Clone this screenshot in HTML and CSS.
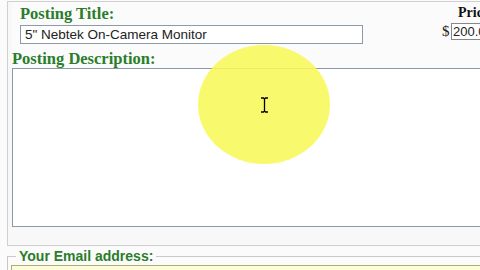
FILE: index.html
```html
<!DOCTYPE html>
<html lang="en">
<head>
  <meta charset="UTF-8" />
  <title>Posting</title>
  <link rel="stylesheet" href="styles.css">
</head>
<body>
  <div class="page">
    <div class="posting">
      <div class="top-row">
        <div class="title-block">
          <label class="label" for="title">Posting Title:</label>
          <input type="text" id="title" class="title-input" value="5&quot; Nebtek On-Camera Monitor">
        </div>
        <div class="price-block">
          <span class="price-label">Price</span>
          <div class="price-row">
            <span class="dollar">$</span>
            <input type="text" class="price-input" value="200.00">
          </div>
        </div>
      </div>
      <label class="label desc-label" for="desc">Posting Description:</label>
      <textarea id="desc" class="desc"></textarea>
    </div>

    <fieldset class="email">
      <legend>Your Email address:</legend>
      <input type="text" class="email-input">
    </fieldset>

    <div class="highlight">
      <svg width="9" height="16" viewBox="0 0 9 16">
        <path d="M1 1h2.5L4.5 2 5.5 1H8M4.5 2v12M1 15h2.5l1-1 1 1H8" fill="none" stroke="#000" stroke-width="1.3"/>
      </svg>
    </div>
  </div>
</body>
</html>
```

FILE: styles.css
```css
body {
  margin: 0;
  background: #fbfbfb;
  overflow: hidden;
  width: 480px;
  height: 270px;
}

.page {
  position: relative;
  width: 480px;
  height: 270px;
  overflow: hidden;
}

.posting {
  margin: 1px 0 0 7px;
  width: 520px;
  height: 245px;
  border: 1px solid #d0d0d0;
  border-right: none;
  box-sizing: border-box;
  padding: 0 0 0 4px;
  background: #f8f8f8;
}

.top-row {
  display: flex;
  height: 46px;
  background: #fbfbfb;
}

.title-block {
  display: flex;
  flex-direction: column;
  padding: 3px 0 0 8px;
  width: 420px;
}

.label {
  font-family: "Liberation Serif", serif;
  font-weight: bold;
  font-size: 16.5px;
  color: #2a7d2a;
  line-height: 18px;
}

.title-input {
  margin-top: 2px;
  width: 343px;
  height: 19px;
  box-sizing: border-box;
  border: 1px solid #8c9bab;
  padding: 0 4px;
  font-family: "Liberation Sans", sans-serif;
  font-size: 13.5px;
  color: #222;
  background: #fff;
}

.price-block {
  display: flex;
  flex-direction: column;
  padding: 3px 0 0 2px;
}

.price-label {
  font-family: "Liberation Serif", serif;
  font-weight: bold;
  font-size: 14px;
  color: #111;
  padding-left: 16px;
  line-height: 15px;
}

.price-row {
  display: flex;
  align-items: center;
  margin-top: 3px;
}

.dollar {
  font-family: "Liberation Serif", serif;
  font-size: 15px;
  color: #222;
  width: 9px;
}

.price-input {
  width: 60px;
  height: 17px;
  box-sizing: border-box;
  border: 1px solid #888;
  padding: 0 1px;
  font-family: "Liberation Sans", sans-serif;
  font-size: 13px;
  color: #222;
  background: #fff;
}

.desc-label {
  display: block;
  padding-top: 2px;
  height: 18px;
  background: #fbfbfb;
}

.desc {
  display: block;
  width: 510px;
  height: 159px;
  box-sizing: border-box;
  border: 1px solid #8a9aaa;
  background: #fff;
  resize: none;
  margin: 0;
}

.email {
  margin: 2px 0 0 7px;
  width: 520px;
  border: 1px solid #c8c8c8;
  border-right: none;
  padding: 0 0 0 3px;
}

.email legend {
  font-family: "Liberation Sans", sans-serif;
  font-weight: bold;
  font-size: 14px;
  color: #2a7d2a;
  padding: 0 3px;
  margin-left: 5px;
}

.email-input {
  width: 500px;
  height: 18px;
  box-sizing: border-box;
  border: 1px solid #a8ad7a;
  background: #fdfdd8;
}

.highlight {
  position: absolute;
  left: 198px;
  top: 45px;
  width: 132px;
  height: 119px;
  border-radius: 50%;
  background: rgba(248, 248, 90, 0.88);
  display: flex;
  align-items: center;
  justify-content: center;
}
```
